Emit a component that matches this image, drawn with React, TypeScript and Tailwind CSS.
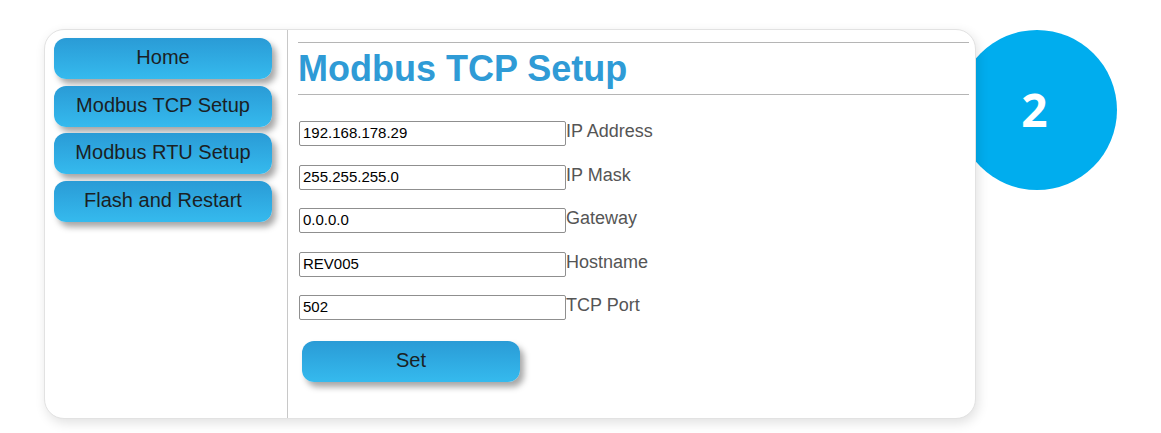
import React from "react";

const navItems = ["Home", "Modbus TCP Setup", "Modbus RTU Setup", "Flash and Restart"];
const fields = [
  { value: "192.168.178.29", label: "IP Address" },
  { value: "255.255.255.0", label: "IP Mask" },
  { value: "0.0.0.0", label: "Gateway" },
  { value: "REV005", label: "Hostname" },
  { value: "502", label: "TCP Port" },
];

function BlueButton({ children, className = "" }: { children: React.ReactNode; className?: string }) {
  return (
    <div
      className={
        "flex h-[41px] w-[218px] items-center justify-center rounded-[12px] bg-gradient-to-b from-[#2a9bd6] to-[#35baee] text-[20px] text-[#1b1f24] shadow-[4px_5px_6px_rgba(0,0,0,0.35)] " +
        className
      }
    >
      <span className="mt-[-3px]">{children}</span>
    </div>
  );
}

export default function App() {
  return (
    <div className="relative h-[433px] w-[1161px] overflow-hidden bg-white" style={{ fontFamily: '"Liberation Sans", Arial, sans-serif' }}>
      <div
        className="absolute left-[957px] top-[30px] z-0 flex h-[160px] w-[160px] items-center justify-center rounded-full bg-[#00adee] text-[46px] font-bold text-white"
        style={{ fontFamily: '"Open Sans", sans-serif' }}
      >
        <span className="ml-[-5px] mt-[-1px]">2</span>
      </div>
      <div className="relative z-10 ml-[44px] mt-[29px] flex h-[390px] w-[932px] rounded-[20px] border border-[#e2e2e2] bg-white shadow-[2px_4px_12px_rgba(0,0,0,0.12)]">
        <div className="flex w-[243px] shrink-0 flex-col gap-[6.5px] border-r border-[#c8c8c8] pl-[9px] pt-[8px]">
          {navItems.map((n) => (
            <BlueButton key={n}>{n}</BlueButton>
          ))}
        </div>
        <div className="flex flex-1 flex-col pl-[10px] pr-[6px] pt-[12px]">
          <div className="h-px bg-[#b5b5b5]" />
          <div className="mt-[5px] text-[36px] font-bold leading-[41px] text-[#2f9bd6]">Modbus TCP Setup</div>
          <div className="mt-[5px] h-px bg-[#b5b5b5]" />
          <div className="mt-[26px] flex flex-col gap-[18.5px]">
            {fields.map((f) => (
              <div key={f.label} className="flex items-start">
                <div className="ml-px flex h-[25px] w-[267px] items-center rounded-[2px] border border-[#8f8f8f] bg-white pl-[3px] text-[15px] text-black">
                  {f.value}
                </div>
                <span className="text-[18px] leading-[21px] text-[#555555]">{f.label}</span>
              </div>
            ))}
          </div>
          <BlueButton className="ml-[4px] mt-[21px]">Set</BlueButton>
        </div>
      </div>
    </div>
  );
}
